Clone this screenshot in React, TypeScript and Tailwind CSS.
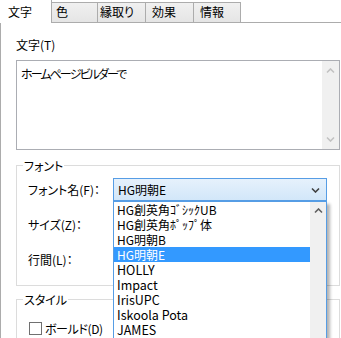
const Chevron = ({ down, color, className }: { down?: boolean; color: string; className?: string }) => (
  <svg width="9" height="6" viewBox="0 0 9 6" className={className}>
    <path
      d={down ? "M1 1.5 L4.5 5 L8 1.5" : "M1 4.5 L4.5 1 L8 4.5"}
      fill="none"
      stroke={color}
      strokeWidth="1.6"
    />
  </svg>
);

const tabs = [
  { label: "色", w: "w-[46px]", pl: "pl-[4px]" },
  { label: "縁取り", w: "w-[48px]", pl: "pl-[2px]" },
  { label: "効果", w: "w-[48px]", pl: "pl-[6px]" },
  { label: "情報", w: "w-[47px]", pl: "pl-[6px]" },
];

const fonts = [
  { name: "HG創英角ｺﾞｼｯｸUB", latin: false },
  { name: "HG創英角ﾎﾟｯﾌﾟ体", latin: false },
  { name: "HG明朝B", latin: false },
  { name: "HG明朝E", latin: false },
  { name: "HOLLY", latin: true },
  { name: "Impact", latin: true },
  { name: "IrisUPC", latin: true },
  { name: "Iskoola Pota", latin: true },
  { name: "JAMES", latin: true },
];

export default function App() {
  return (
    <div className="relative w-[341px] h-[338px] overflow-hidden bg-white text-[12px] leading-[15px] text-black whitespace-nowrap [font-feature-settings:'palt'] font-['Noto_Sans_CJK_JP',sans-serif]">
      {/* Tabs */}
      <div className="flex h-[23px]">
        <div className="w-[52px] h-[23px] border-r border-[#acacac] bg-white pl-[8px] pt-[4px]">文字</div>
        {tabs.map((t) => (
          <div
            key={t.label}
            className={`${t.w} ${t.pl} mt-[2px] h-[21px] border-t border-r border-b border-[#acacac] bg-gradient-to-b from-[#f0f0f0] to-[#e5e5e5] pt-[1px]`}
          >
            {t.label}
          </div>
        ))}
        <div className="flex-1 border-b border-[#acacac]" />
      </div>

      {/* Panel */}
      <div className="h-[315px] border-l border-[#acacac] pl-[15px]">
        <div className="pt-[14px]">文字(T)</div>
        <div className="mt-[8px] flex w-[324px] h-[90px] border border-[#abadb3]">
          <div className="flex-1 pl-[4px] pt-[5px] tracking-[-1.9px]">ホームページビルダーで</div>
          <div className="w-[17px] bg-[#f0f0f0] flex flex-col items-center justify-between pt-[7px] pb-[7px]">
            <Chevron color="#c2c2c2" />
            <Chevron down color="#c2c2c2" />
          </div>
        </div>

        {/* Font group */}
        <div className="relative mt-[15px] w-[324px] h-[121px] border border-[#dcdcdc]">
          <div className="absolute left-[6px] -top-[8px] bg-white px-[1px]">フォント</div>
          <div className="flex flex-col gap-[12px] pt-[12px] pl-[11px]">
            <div className="flex items-center h-[23px]">
              <div className="w-[85px]">フォント名(F)：</div>
              <div className="flex items-center justify-between w-[214px] h-[23px] border border-[#569de5] bg-gradient-to-b from-[#e6f1fc] to-[#d2e7f9] pl-[4px] pr-[6px]">
                <span>HG明朝E</span>
                <Chevron down color="#404040" />
              </div>
            </div>
            <div className="flex items-center h-[23px]">
              <div className="w-[85px]">サイズ(Z)：</div>
            </div>
            <div className="flex items-center h-[23px]">
              <div className="w-[85px]">行間(L)：</div>
            </div>
          </div>
        </div>

        {/* Style group */}
        <div className="relative mt-[13px] w-[324px] h-[60px] border border-[#dcdcdc]">
          <div className="absolute left-[6px] -top-[8px] bg-white px-[1px]">スタイル</div>
          <div className="flex items-center pt-[21px] pl-[12px] h-[36px]">
            <div className="w-[13px] h-[13px] border border-[#707070] bg-white" />
            <span className="ml-[3px] tracking-[-0.4px]">ボールド(D)</span>
          </div>
        </div>
      </div>

      {/* Dropdown list (open popup) */}
      <div className="absolute left-[113px] top-[201px] w-[214px] h-[160px] flex border border-[#569de5] bg-white shadow-[3px_3px_3px_rgba(0,0,0,0.3)]">
        <div className="w-[196px] flex flex-col">
          {fonts.map((f) => (
            <div
              key={f.name}
              className={`h-[15px] pl-[3px] leading-[15px] ${f.latin ? "text-[12.5px]" : ""} ${
                f.name === "HG明朝E" ? "bg-[#3399ff] text-white" : ""
              }`}
            >
              {f.name}
            </div>
          ))}
        </div>
        <div className="w-[16px] bg-[#f0f0f0] flex flex-col items-center pt-[6px]">
          <Chevron color="#606060" />
        </div>
      </div>
    </div>
  );
}
